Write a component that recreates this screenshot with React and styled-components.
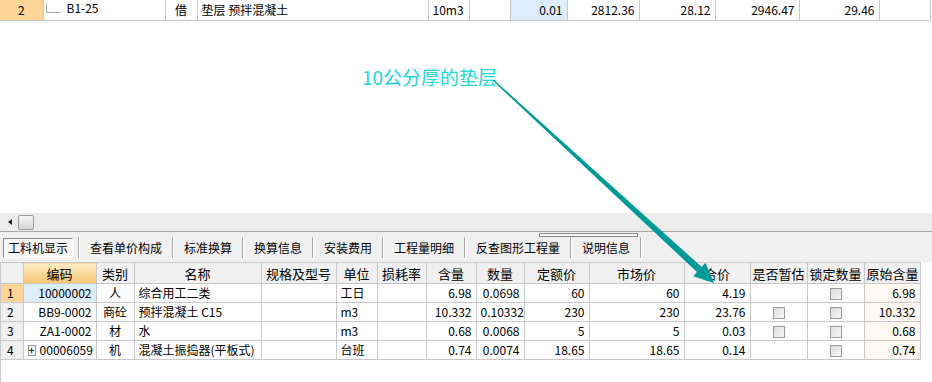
import React from 'react';
import styled, { createGlobalStyle } from 'styled-components';

const GlobalStyle = createGlobalStyle`
  html, body {
    margin: 0;
    padding: 0;
    background: #ffffff;
    overflow: hidden;
  }
  body {
    font-family: "Noto Sans CJK SC", "Liberation Sans", sans-serif;
    font-size: 12px;
    color: #000;
  }
`;

const Page = styled.div`
  position: relative;
  width: 932px;
  height: 382px;
  display: flex;
  flex-direction: column;
  background: #ffffff;
`;

const TopPanel = styled.div`
  height: 213px;
  background: #ffffff;
`;

const Grid = styled.table`
  border-collapse: collapse;
  table-layout: fixed;
  width: ${(p) => p.$width}px;
`;

const Cell = styled.td`
  height: ${(p) => p.$h || 18}px;
  padding: 0 4px;
  border-right: 1px solid #c8c8c8;
  border-bottom: 1px solid #c8c8c8;
  text-align: ${(p) => p.$align || 'left'};
  background: ${(p) => p.$bg || 'transparent'};
  white-space: nowrap;
  overflow: hidden;
  line-height: 12px;
  font-size: 12px;
  box-sizing: border-box;
  vertical-align: middle;
`;

const HeadCell = styled.th`
  height: 21px;
  padding: 0 2px;
  font-weight: normal;
  font-size: 13px;
  border-right: 1px solid #c8c8c8;
  border-bottom: 1px solid #c8c8c8;
  border-top: 1px solid #c8c8c8;
  background: ${(p) =>
    p.$active ? 'linear-gradient(#fdebc4, #f7c673)' : '#f0f0f0'};
  white-space: nowrap;
  overflow: hidden;
  box-sizing: border-box;
`;

const Tree = styled.span`
  display: inline-block;
  width: 14px;
  height: 9px;
  margin: 0 6px 4px -2px;
  border-left: 1px solid #b0b0b0;
  border-bottom: 1px solid #b0b0b0;
  vertical-align: middle;
`;

const ScrollBar = styled.div`
  height: 18px;
  background: #ececec;
  border-bottom: 1px solid #a8a8a8;
  display: flex;
  align-items: center;
  gap: 6px;
  padding-left: 8px;
`;

const ArrowLeft = styled.span`
  width: 0;
  height: 0;
  border-top: 3px solid transparent;
  border-bottom: 3px solid transparent;
  border-right: 4px solid #222;
`;

const Thumb = styled.div`
  width: 14px;
  height: 13px;
  border: 1px solid #9a9a9a;
  border-radius: 2px;
  background: linear-gradient(#f7f7f7, #d4d4d4);
`;

const TabBar = styled.div`
  position: relative;
  height: 30px;
  background: #f0f0f0;
  display: flex;
  align-items: center;
  padding: 1px 0 0 3px;
  box-sizing: border-box;
`;

const Tab = styled.div`
  height: 20px;
  display: flex;
  align-items: center;
  padding: 0 ${(p) => (p.$active ? 4 : 9)}px;
  font-size: 12px;
  white-space: nowrap;
  box-sizing: border-box;
  border: 1px solid ${(p) => (p.$active ? '#8a8a8a' : 'transparent')};
  border-right-color: ${(p) => (p.$active ? '#ffffff' : 'transparent')};
  border-bottom-color: ${(p) => (p.$active ? '#ffffff' : 'transparent')};
  background: ${(p) => (p.$active ? '#f6f6f6' : 'transparent')};
  margin-right: ${(p) => (p.$active ? 5 : 0)}px;
`;

const Sep = styled.span`
  width: 1px;
  height: 21px;
  background: #a8a8a8;
  border-right: 1px solid #ffffff;
`;

const Splitter = styled.div`
  position: absolute;
  left: 539px;
  top: 1px;
  width: 99px;
  height: 4px;
  border: 1px solid #8a8a8a;
  box-sizing: border-box;
  background: #f4f4f4;
`;

const BottomPanel = styled.div`
  flex: 1;
  background: #ffffff;
  border-left: 1px solid #c8c8c8;
`;

const NumCell = styled(Cell)`
  padding: 0 0 0 6px;
  background: ${(p) => (p.$active ? '#fcd597' : '#f0f0f0')};
`;

const Check = styled.span`
  display: inline-block;
  width: 12px;
  height: 12px;
  border: 1px solid #9a9a9a;
  background: linear-gradient(135deg, #dcdcdc, #f8f8f8);
  box-sizing: border-box;
  vertical-align: middle;
`;

const Plus = styled.span`
  display: inline-flex;
  align-items: center;
  justify-content: center;
  width: 11px;
  height: 11px;
  border: 1px solid #9a9a9a;
  background: #f4f4f4;
  font-size: 11px;
  line-height: 1;
  margin-right: 4px;
  vertical-align: middle;
  box-sizing: border-box;
`;

const CodeWrap = styled.div`
  display: flex;
  align-items: center;
  justify-content: ${(p) => (p.$plus ? 'space-between' : 'flex-end')};
`;

const Note = styled.div`
  position: absolute;
  left: 362px;
  top: 63px;
  font-size: 19px;
  color: #22d6d9;
  white-space: nowrap;
`;

const Overlay = styled.svg`
  position: absolute;
  left: 0;
  top: 0;
  pointer-events: none;
`;

const topCols = [43, 122, 32, 231, 41, 41, 57, 72, 76, 84, 80, 51];
const bottomCols = [22, 73, 38, 127, 75, 41, 49, 50, 48, 65, 95, 66, 57, 57, 56];
const headers = ['', '编码', '类别', '名称', '规格及型号', '单位', '损耗率', '含量', '数量', '定额价', '市场价', '合价', '是否暂估', '锁定数量', '原始含量'];

const rows = [
  { n: 1, code: '10000002', type: '人', name: '综合用工二类', unit: '工日', qty: '6.98', num: '0.0698', dp: '60', mp: '60', total: '4.19', est: false, orig: '6.98' },
  { n: 2, code: 'BB9-0002', type: '商砼', name: '预拌混凝土 C15', unit: 'm3', qty: '10.332', num: '0.10332', dp: '230', mp: '230', total: '23.76', est: true, orig: '10.332' },
  { n: 3, code: 'ZA1-0002', type: '材', name: '水', unit: 'm3', qty: '0.68', num: '0.0068', dp: '5', mp: '5', total: '0.03', est: true, orig: '0.68' },
  { n: 4, code: '00006059', type: '机', name: '混凝土振捣器(平板式)', unit: '台班', qty: '0.74', num: '0.0074', dp: '18.65', mp: '18.65', total: '0.14', est: false, orig: '0.74', plus: true },
];

const tabs = ['工料机显示', '查看单价构成', '标准换算', '换算信息', '安装费用', '工程量明细', '反查图形工程量', '说明信息'];

const sum = (a) => a.reduce((s, v) => s + v, 0);

const App = () => {
  return (
    <Page>
      <GlobalStyle />
      <TopPanel>
        <Grid $width={sum(topCols)}>
          <colgroup>
            {topCols.map((w, i) => (
              <col key={i} style={{ width: w }} />
            ))}
          </colgroup>
          <tbody>
            <tr>
              <Cell $h={20} $align="center" $bg="#fcd597">2</Cell>
              <Cell $h={20}>
                <Tree />B1-25
              </Cell>
              <Cell $h={20} $align="center">借</Cell>
              <Cell $h={20}>垫层 预拌混凝土</Cell>
              <Cell $h={20}>10m3</Cell>
              <Cell $h={20} />
              <Cell $h={20} $align="right" $bg="#deedfc">0.01</Cell>
              <Cell $h={20} $align="right">2812.36</Cell>
              <Cell $h={20} $align="right">28.12</Cell>
              <Cell $h={20} $align="right">2946.47</Cell>
              <Cell $h={20} $align="right">29.46</Cell>
              <Cell $h={20} />
            </tr>
          </tbody>
        </Grid>
      </TopPanel>

      <ScrollBar>
        <ArrowLeft />
        <Thumb />
      </ScrollBar>

      <TabBar>
        <Splitter />
        {tabs.map((t, i) => (
          <React.Fragment key={t}>
            <Tab $active={i === 0}>{t}</Tab>
            <Sep />
          </React.Fragment>
        ))}
      </TabBar>

      <BottomPanel>
        <Grid $width={sum(bottomCols) - 1}>
          <colgroup>
            {bottomCols.map((w, i) => (
              <col key={i} style={{ width: w }} />
            ))}
          </colgroup>
          <thead>
            <tr>
              {headers.map((h, i) => (
                <HeadCell key={i} $active={i === 1}>
                  {h}
                </HeadCell>
              ))}
            </tr>
          </thead>
          <tbody>
            {rows.map((r) => (
              <tr key={r.n}>
                <NumCell $h={19} $active={r.n === 1}>{r.n}</NumCell>
                <Cell $h={19} $bg={r.n === 1 ? '#deedfc' : undefined}>
                  <CodeWrap $plus={r.plus}>
                    {r.plus && <Plus>+</Plus>}
                    {r.code}
                  </CodeWrap>
                </Cell>
                <Cell $h={19} $align="center">{r.type}</Cell>
                <Cell $h={19}>{r.name}</Cell>
                <Cell $h={19} />
                <Cell $h={19}>{r.unit}</Cell>
                <Cell $h={19} />
                <Cell $h={19} $align="right">{r.qty}</Cell>
                <Cell $h={19} $align="right">{r.num}</Cell>
                <Cell $h={19} $align="right">{r.dp}</Cell>
                <Cell $h={19} $align="right">{r.mp}</Cell>
                <Cell $h={19} $align="right">{r.total}</Cell>
                <Cell $h={19} $align="center">{r.est && <Check />}</Cell>
                <Cell $h={19} $align="center"><Check /></Cell>
                <Cell $h={19} $align="right" $bg="#fdf8f1">{r.orig}</Cell>
              </tr>
            ))}
          </tbody>
        </Grid>
      </BottomPanel>

      <Note>10公分厚的垫层</Note>
      <Overlay width="932" height="382" viewBox="0 0 932 382">
        <polygon
          points="492.6,80.6 493.4,79.4 702,267.3 697,272"
          fill="#00999a"
        />
        <polygon points="714,283 693.2,276.2 705.4,262.8" fill="#00999a" />
      </Overlay>
    </Page>
  );
};

export default App;
